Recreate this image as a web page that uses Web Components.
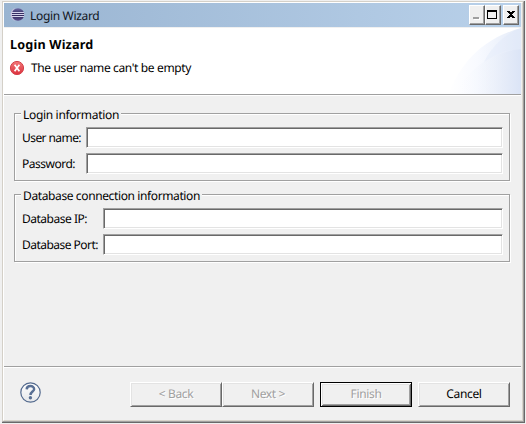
<!DOCTYPE html>
<html lang="en">
<head>
<meta charset="utf-8">
<title>Login Wizard</title>
<style>
html,body{margin:0;width:526px;height:424px;overflow:hidden;background:#f0f0f0}
body{font:12px/16px "Noto Sans","Open Sans",sans-serif;color:#000;text-rendering:geometricPrecision}
</style>
</head>
<body>
<wizard-window>
  <title-bar slot="title">Login Wizard</title-bar>
  <wizard-header slot="header" heading="Login Wizard">The user name can't be empty</wizard-header>
  <field-group legend="Login information" style="--label:64px;--legend:96px">
    <text-field label="User name:" style="--text:59px"></text-field>
    <text-field label="Password:" style="--text:53px"></text-field>
  </field-group>
  <field-group legend="Database connection information" style="--label:81px;--legend:177px">
    <text-field label="Database IP:" style="--text:65px"></text-field>
    <text-field label="Database Port:" style="--text:76px"></text-field>
  </field-group>
  <help-icon slot="footer"></help-icon>
  <push-button slot="footer" disabled>&lt; Back</push-button>
  <push-button slot="footer" disabled>Next &gt;</push-button>
  <push-button slot="footer" disabled primary>Finish</push-button>
  <push-button slot="footer">Cancel</push-button>
</wizard-window>
<script>
const define = (name, html, setup) => customElements.define(name, class extends HTMLElement {
  connectedCallback() {
    if (this.shadowRoot) return;
    const root = this.attachShadow({mode: 'open'});
    const t = document.createElement('template');
    t.innerHTML = html;
    root.append(t.content.cloneNode(true));
    if (setup) setup(this, root);
  }
});

// Tightens or loosens tracking so that a caption fills a given width.
const track = (el, width, text) => {
  const range = document.createRange();
  range.selectNodeContents(text || el);
  const w = range.getBoundingClientRect().width;
  el.style.letterSpacing = ((width - w) / (text || el).textContent.length) + 'px';
};

define('wizard-window', `<style>
:host{display:flex;box-sizing:border-box;width:525px;height:423px;padding-top:1px;background:#f0f0f0}
.l{width:2px;flex:none}
.a{display:flex;flex:1;border-right:1px solid #696969;border-bottom:1px solid #696969}
.b{display:flex;flex:1;border:1px solid #d4d0c8;border-right-color:#a0a0a0;border-bottom-color:#a0a0a0}
.c{display:flex;flex-direction:column;flex:1;border:1px solid #fff;border-right-color:#d8d4cb;border-bottom-color:#d8d4cb}
.d{display:flex;flex-direction:column;flex:1;border-right:1px solid #f0f0f0}
main{flex:1;display:flex;flex-direction:column;gap:5px;padding:10px 11px 0 10px}
footer{box-sizing:border-box;height:54px;border-top:1px solid #a0a0a0;box-shadow:inset 0 1px #fff;display:flex;padding:15px 11px 0 16px}
</style>
<div class="l"></div><div class="a"><div class="b"><div class="c"><div class="d">
<slot name="title"></slot><slot name="header"></slot>
<main><slot></slot></main><footer><slot name="footer"></slot></footer>
</div></div></div></div>`);

define('title-bar', `<style>
:host{display:flex;height:24px;background:linear-gradient(90deg,#99b4d1,#b9d1ea);border-bottom:1px solid #f0f0f0;flex:none;padding:0 2px 0 6px;box-sizing:content-box}
.logo{margin-top:4px;flex:none}
.t{margin-left:5px;line-height:25px;flex:1;letter-spacing:-.33px;color:#10151c}
.w{box-sizing:border-box;width:16px;height:20px;margin-top:2px;background:#f0f0f0;border:1px solid #fff;border-right-color:#696969;border-bottom-color:#696969;box-shadow:inset -1px -1px #a0a0a0}
.x{margin-left:2px}
.w svg{display:block}
</style>
<svg class="logo" width="15" height="15" viewBox="0 0 15 15"><defs><linearGradient id="g" x2="0" y2="1"><stop stop-color="#6f6ba6"/><stop offset=".5" stop-color="#2c2255"/><stop offset="1" stop-color="#5c4f8c"/></linearGradient></defs>
<path d="M5 1A7 7 0 0 0 5 14A10 10 0 0 1 5 1" fill="#c4bdd8"/><circle cx="8" cy="7.5" r="6.2" fill="url(#g)"/><path d="M1.5 5.5H14M1 7.5H14.5M1.5 9.5H14" stroke="#d4d2ea"/></svg>
<span class="t"><slot></slot></span>
<span class="w"><svg width="14" height="18" shape-rendering="crispEdges"><path d="M4 12h6v2H4z" fill="#fff"/><path d="M3 11h6v2H3z" fill="#a0a0a0"/></svg></span>
<span class="w"><svg width="14" height="18" shape-rendering="crispEdges"><path d="M1 4h10v9H1zM2 6v6h8V6z" fill-rule="evenodd"/></svg></span>
<span class="w x"><svg width="14" height="18" shape-rendering="crispEdges"><path d="M3 5h3v1h2V5h3v1h-1v1H9v1H8v1h1v1h1v1h1v1H8v-1H6v1H3v-1h1v-1h1V9h1V8H5V7H4V6H3z"/></svg></span>`);

define('wizard-header', `<style>
:host{display:grid;grid-template-columns:1fr 80px;height:66px;flex:none;background:#fff;border-bottom:1px solid #a0a0a0;box-shadow:0 1px #fff}
h1{margin:9px 0 0 6px;font:bold 12.6px/16px "Noto Sans",sans-serif;white-space:nowrap}
p{display:flex;margin:7px 0 0 5px;gap:6px;line-height:16px;white-space:nowrap}
p svg{margin-top:1px;flex:none}
</style>
<div><h1></h1><p><svg width="16" height="16" viewBox="0 0 16 16"><defs><linearGradient id="r" x2="0" y2="1"><stop stop-color="#f27878"/><stop offset="1" stop-color="#dc303d"/></linearGradient></defs><circle cx="8" cy="7" r="6.6" fill="url(#r)" stroke="#d4434b"/><path d="M5.6 3.7L10.4 10.3M10.4 3.7L5.6 10.3" stroke="#fff" stroke-width="1.7"/></svg><span class="m"><slot></slot></span></p></div>
<svg width="80" height="66" viewBox="0 0 80 66"><defs><linearGradient id="a"><stop stop-color="#fff"/><stop offset=".4" stop-color="#f8faff"/><stop offset="1" stop-color="#e4ebf8"/></linearGradient><linearGradient id="b"><stop stop-color="#fff" stop-opacity="0"/><stop offset="1" stop-color="#dbe4f6"/></linearGradient></defs>
<path d="M7 66C18 42 34 13 80 0V66z" fill="url(#a)"/><path d="M43 34C52 16 66 5 80 0V21Q60 22 43 34z" fill="#dce6f8" opacity=".3"/><path d="M12 66C28 43 47 24 80 21V66z" fill="url(#b)"/></svg>`,
(e, r) => {
  const h = r.querySelector('h1');
  h.textContent = e.getAttribute('heading');
  track(h, 83.5);
  track(r.querySelector('.m'), 160, e);
});

define('field-group', `<style>
:host{display:block;height:76px}
.g{display:grid;grid-template:16px 1fr/7px auto 1fr;height:76px;position:relative}
.frame{position:absolute;inset:8px 0 0;border:1px solid #a0a0a0;box-shadow:1px 1px #fff,inset 1px 1px #fff}
.legend{position:relative;grid-column:2;background:#f0f0f0;padding:2px 2px 0;height:16px;white-space:nowrap}
.body{position:relative;grid-column:1/4;display:flex;flex-direction:column;gap:5px;padding:6px 7px 0 8px}
</style><div class="g"><div class="frame"></div><span class="legend"></span><div class="body"><slot></slot></div></div>`,
(e, r) => {
  const l = r.querySelector('.legend');
  l.textContent = e.getAttribute('legend');
  track(l, parseFloat(e.style.getPropertyValue('--legend')));
});

define('text-field', `<style>
:host{display:grid;grid-template-columns:var(--label) 1fr;height:21px}
label{line-height:21px;white-space:nowrap}
i{box-sizing:border-box;height:21px;background:#fff;border:1px solid #a0a0a0;border-right-color:#fff;border-bottom-color:#fff;box-shadow:inset 1px 1px #696969,inset -1px -1px #e3e3e3}
</style><label></label><i></i>`,
(e, r) => {
  const l = r.querySelector('label');
  l.textContent = e.getAttribute('label');
  track(l, parseFloat(e.style.getPropertyValue('--text')));
});

define('push-button', `<style>
:host{display:block;box-sizing:border-box;width:92px;height:25px;text-align:center;line-height:22px;letter-spacing:-.35px;border:1px solid #fff;border-right-color:#696969;border-bottom-color:#696969;box-shadow:inset 1px 1px #e3e3e3,inset -1px -1px #a0a0a0}
:host([disabled]){color:#a0a0a0;text-shadow:1px 1px #fff}
:host([primary]){border-color:#000;margin:0 6px;box-shadow:inset 1px 1px #fff,inset -1px -1px #696969,inset 2px 2px #e3e3e3,inset -2px -2px #a0a0a0}
</style><slot></slot>`);

define('help-icon', `<style>:host{display:block;width:110px;height:25px}svg{display:block}</style>
<svg width="22" height="22" viewBox="0 0 22 22"><defs><linearGradient id="h" x2="0" y2="1"><stop stop-color="#fff"/><stop offset="1" stop-color="#e5e7ea"/></linearGradient></defs><circle cx="10.5" cy="10.5" r="9.7" fill="url(#h)" stroke="#536a8e" stroke-width="1.2"/><path d="M6.7 7.4C6.8 2.9 14.3 3.1 14.1 7.2C14 9.5 10.6 9.8 10.5 13" fill="none" stroke="#586f94" stroke-width="2.5"/><circle cx="10.4" cy="15.7" r="1.7" fill="#586f94"/></svg>`);
</script>
</body>
</html>
